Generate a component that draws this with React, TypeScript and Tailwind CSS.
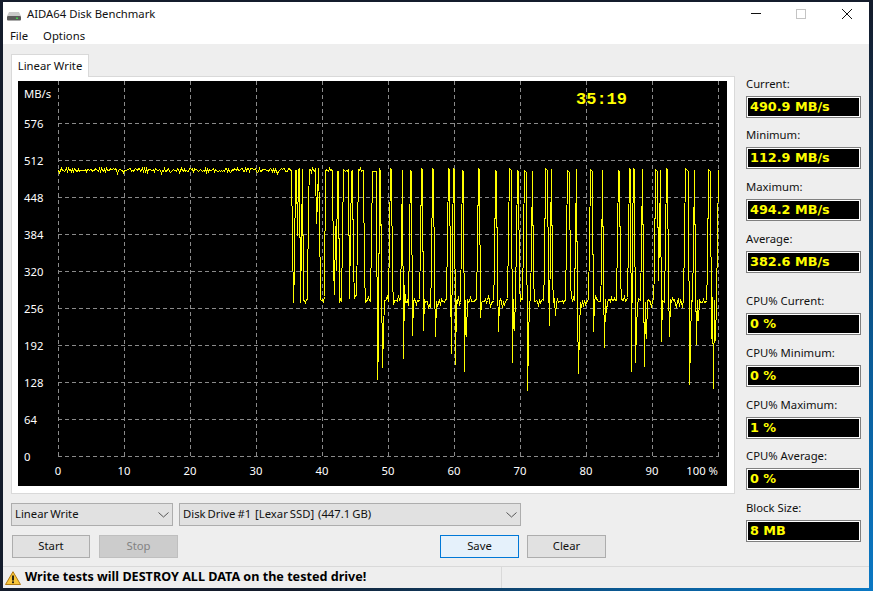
import React from "react";

const UI = "font-['Noto_Sans',sans-serif]";

function buildTrace(): string {
  let seed = 12345;
  const rnd = () => {
    seed = (seed * 1103515245 + 12345) & 0x7fffffff;
    return seed / 0x7fffffff;
  };
  const y: number[] = [];
  const top = () => 168 + Math.floor(rnd() * 4) + (rnd() > 0.9 ? 2 : 0);
  const base = () => {
    const r = rnd();
    return 299 + Math.floor(rnd() * 4) + (r > 0.9 ? -4 : r < 0.08 ? 5 : 0);
  };
  for (let x = 58; x <= 718; x++) y[x] = x < 292 ? top() : base();

  const plateau = (a: number, b: number, upMid: number, downMid: number) => {
    for (let x = a; x <= b; x++) y[x] = top();
    y[a - 1] = upMid;
    y[b + 1] = downMid;
  };
  plateau(295, 296, 268, 213);
  plateau(298, 299, 235, 302);
  plateau(302, 302, 270, 300);
  plateau(309, 315, 202, 223);
  plateau(318, 318, 200, 213);
  plateau(325, 332, 296, 266);
  plateau(337, 338, 270, 290);
  plateau(343, 348, 236, 298);
  plateau(351, 352, 236, 265);
  plateau(358, 363, 236, 272);
  plateau(372, 376, 236, 276);
  plateau(379, 380, 240, 275);
  y[293] = 302;
  y[292] = 238;
  y[300] = 302;
  y[301] = 240;
  y[334] = 294;
  y[335] = 226;
  y[339] = 302;
  y[377] = 379;
  y[378] = 345;
  y[382] = 367;
  y[383] = 331;

  const spikes: [number, number, number][] = [
    [390, 168, 2], [402, 170, 2], [410, 170, 2], [421, 168, 2], [432, 168, 2],
    [448, 168, 2], [453, 168, 2], [462, 170, 2], [478, 168, 2], [495, 170, 2],
    [509, 168, 3], [517, 170, 2], [524, 170, 3], [532, 171, 1], [545, 168, 3],
    [551, 169, 1], [567, 170, 3], [576, 169, 1], [590, 169, 3], [602, 170, 1],
    [618, 170, 2], [629, 168, 2], [633, 168, 2], [642, 169, 1], [655, 169, 3],
    [660, 170, 1], [666, 168, 2], [685, 168, 4], [694, 170, 1], [708, 169, 3],
    [718, 170, 1],
  ];
  const mids = [236, 240, 238, 245, 270];
  spikes.forEach(([x, t, w], i) => {
    for (let k = 0; k < w; k++) y[x + k] = t + k;
    y[x - 1] = mids[i % 5];
    if (x + w <= 718) y[x + w] = mids[(i + 2) % 5] + 40;
  });

  const dips: [number, number][] = [
    [403, 358], [412, 335], [423, 330], [435, 336], [451, 353], [455, 364],
    [464, 371], [466, 336], [480, 317], [498, 331], [512, 362], [514, 330],
    [527, 390], [528, 344], [549, 325], [555, 315], [578, 373], [579, 328],
    [593, 331], [604, 347], [606, 312], [631, 371], [635, 362], [636, 328],
    [644, 366], [646, 338], [661, 341], [669, 336], [689, 384], [690, 342],
    [696, 344], [698, 320], [711, 338], [713, 388], [715, 340],
  ];
  dips.forEach(([x, v]) => {
    y[x] = v;
  });

  const pts: string[] = [];
  for (let x = 58; x <= 718; x++) pts.push(`${x + 0.5},${y[x] + 0.5}`);
  return pts.join(" ");
}

const trace = buildTrace();
const gridX = [58, 124, 190, 256, 322, 388, 454, 520, 586, 652, 718];
const gridY = [123, 160, 197, 234, 271, 308, 345, 382, 419, 456];
const yLabels = ["576", "512", "448", "384", "320", "256", "192", "128", "64", "0"];
const xLabels = ["0", "10", "20", "30", "40", "50", "60", "70", "80", "90"];

function Chart() {
  const font = { fontFamily: "'Noto Sans', sans-serif", fontSize: 11.3 };
  return (
    <svg viewBox="18 81 709 405" className="block w-[709px] h-[405px]">
      <g stroke="#8a8a8a" strokeWidth="1" strokeDasharray="4 3" shapeRendering="crispEdges">
        {gridX.map((x) => (
          <line key={x} x1={x + 0.5} x2={x + 0.5} y1="81" y2="457" />
        ))}
        {gridY.map((y) => (
          <line key={y} x1="58" x2="719" y1={y + 0.5} y2={y + 0.5} />
        ))}
      </g>
      <polyline points={trace} fill="none" stroke="#ffff00" strokeWidth="1" shapeRendering="crispEdges" />
      <g fill="#ffffff" style={font}>
        <text x="24" y="98">MB/s</text>
        {yLabels.map((l, i) => (
          <text key={l} x="24" y={gridY[i] + 5}>{l}</text>
        ))}
        {xLabels.map((l, i) => (
          <text key={l} x={gridX[i]} y="475" textAnchor="middle">{l}</text>
        ))}
        <text x="718" y="475" textAnchor="end">100 %</text>
      </g>
      <text x="576" y="104" fill="#ffff00" fontWeight="700" style={{ fontFamily: "'Liberation Mono', monospace", fontSize: 17 }}>
        35:19
      </text>
    </svg>
  );
}

function Stat({ label, value, mt }: { label: string; value: string; mt: string }) {
  return (
    <div className={mt}>
      <div className="h-[20px] text-[11.3px] leading-[16px] text-[#111]">{label}</div>
      <div className="h-[22px] w-[115px] border border-[#7f7f7f] bg-white p-px">
        <div className="h-full bg-black pl-[2px] font-['DejaVu_Sans',sans-serif] text-[12.8px] font-bold leading-[18px] text-[#ffff00] whitespace-pre">
          {value}
        </div>
      </div>
    </div>
  );
}

function Chevron() {
  return (
    <svg width="11" height="6" viewBox="0 0 11 6" className="shrink-0">
      <path d="M0.5 0.5 L5.5 5 L10.5 0.5" fill="none" stroke="#555" strokeWidth="1" />
    </svg>
  );
}

function Combo({ text, w }: { text: string; w: string }) {
  return (
    <div className={`flex h-[23px] items-center justify-between border border-[#adadad] bg-[#e1e1e1] pl-[3px] pr-[3px] text-[11.3px] text-[#111] whitespace-pre [word-spacing:-1px] ${w}`}>
      <span>{text}</span>
      <Chevron />
    </div>
  );
}

export default function App() {
  return (
    <div className={`${UI} h-[591px] w-[873px] overflow-hidden bg-[#141c2c] bg-[radial-gradient(circle_at_100%_100%,#0a78c4_0%,#0a5c98_22%,#141c2c_55%)] pl-[3px] pt-[2px]`}>
      <div className="flex h-[586px] w-[866px] flex-col bg-[#eeeeee]">
        {/* title + menu */}
        <div className="h-[42px] shrink-0 bg-white">
          <div className="flex h-[24px] items-center">
            <svg width="14" height="10" viewBox="0 0 14 10" className="ml-[4px] mt-[4px]">
              <path d="M2 1 H12 L14 5 H0 Z" fill="#c9c9c9" />
              <rect x="0" y="5" width="14" height="4.5" rx="1" fill="#5a5a5a" />
              <rect x="9" y="6.5" width="2" height="1.5" fill="#3fd24a" />
            </svg>
            <span className="ml-[6px] text-[11.3px] text-[#111]">AIDA64 Disk Benchmark</span>
            <svg width="102" height="12" viewBox="0 0 102 12" className="ml-auto mr-[16px]">
              <path d="M0 5.5 H10" stroke="#111" strokeWidth="1" />
              <rect x="45.5" y="1.5" width="9" height="9" fill="none" stroke="#c4c4c4" />
              <path d="M91 1 L101 11 M101 1 L91 11" stroke="#111" strokeWidth="1" fill="none" />
            </svg>
          </div>
          <div className="flex h-[18px] items-center gap-[15px] pl-[7px] pt-[2px] text-[11.3px] text-[#111]">
            <span>File</span>
            <span>Options</span>
          </div>
        </div>

        {/* body */}
        <div className="flex min-h-0 flex-1">
          <div className="ml-[8px] w-[725px] shrink-0 pt-[10px]">
            <div className="relative z-10 -mb-px flex h-[23px] w-[78px] items-center justify-center border border-b-0 border-[#d9d9d9] bg-white text-[11.3px] text-[#111]">
              Linear Write
            </div>
            <div className="h-[418px] w-[724px] border border-[#d9d9d9] bg-white pb-[6px] pl-[6px] pt-[4px]">
              <div className="h-[405px] w-[709px] bg-black">
                <Chart />
              </div>
            </div>
            <div className="mt-[9px] flex gap-[6px]">
              <Combo text="Linear Write" w="w-[162px]" />
              <Combo text="Disk Drive #1  [Lexar SSD]  (447.1 GB)" w="w-[342px]" />
            </div>
            <div className="mt-[9px] flex pl-px text-[11.3px]">
              <button className="h-[23px] w-[78px] border border-[#adadad] bg-[#e1e1e1] text-[#111]">Start</button>
              <button disabled className="ml-[9px] h-[23px] w-[79px] border border-[#bfbfbf] bg-[#cccccc] text-[#838383]">Stop</button>
              <button className="ml-[262px] h-[23px] w-[79px] border border-[#0078d7] bg-[#e5f1fb] text-[#111]">Save</button>
              <button className="ml-[8px] h-[23px] w-[79px] border border-[#adadad] bg-[#e1e1e1] text-[#111]">Clear</button>
            </div>
          </div>

          <div className="ml-[10px] pt-[32px]">
            <Stat label="Current:" value="490.9 MB/s" mt="mt-0" />
            <Stat label="Minimum:" value="112.9 MB/s" mt="mt-[9px]" />
            <Stat label="Maximum:" value="494.2 MB/s" mt="mt-[10px]" />
            <Stat label="Average:" value="382.6 MB/s" mt="mt-[10px]" />
            <Stat label="CPU% Current:" value="0 %" mt="mt-[20px]" />
            <Stat label="CPU% Minimum:" value="0 %" mt="mt-[10px]" />
            <Stat label="CPU% Maximum:" value="1 %" mt="mt-[10px]" />
            <Stat label="CPU% Average:" value="0 %" mt="mt-[9px]" />
            <Stat label="Block Size:" value="8 MB" mt="mt-[10px]" />
          </div>
        </div>

        {/* status */}
        <div className="flex h-[22px] shrink-0 border-t border-[#d9d9d9]">
          <div className="flex w-[499px] items-center border-r border-[#d9d9d9] pl-[2px]">
            <svg width="16" height="14" viewBox="0 0 16 14">
              <path d="M8 0.7 L15.5 13.5 H0.5 Z" fill="#f8c63a" stroke="#b27a12" strokeWidth="1" strokeLinejoin="round" />
              <rect x="7.1" y="4.5" width="1.8" height="5" fill="#111" />
              <rect x="7.1" y="10.4" width="1.8" height="1.8" fill="#111" />
            </svg>
            <span className="ml-[4px] text-[12.6px] font-bold text-black">Write tests will DESTROY ALL DATA on the tested drive!</span>
          </div>
        </div>
      </div>
    </div>
  );
}
